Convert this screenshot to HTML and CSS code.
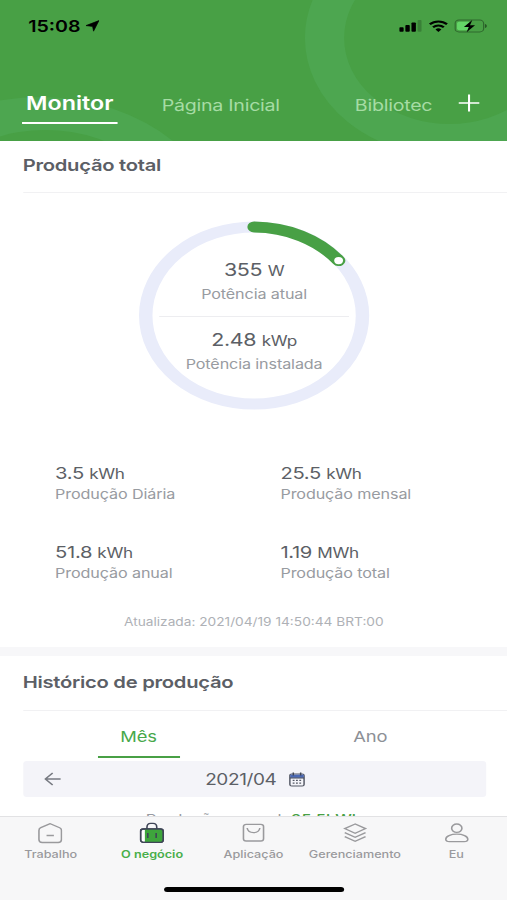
FILE: index.html
```html
<!DOCTYPE html>
<html lang="pt-BR">
<head>
  <meta charset="UTF-8">
  <meta name="viewport" content="width=device-width, initial-scale=1.0">
  <link rel="stylesheet" href="styles.css">
  <title>Monitor</title>
</head>
<body>
  <div class="screen">
    <header class="header">
      <svg class="header__rings" viewBox="0 0 414 141">
        <circle cx="367" cy="38" r="102" fill="none" stroke="#4da650" stroke-width="32"/>
        <circle cx="33" cy="252" r="155" fill="#4da650"/>
        <circle cx="37" cy="240" r="110" fill="#48a045"/>
      </svg>

      <div class="status">
        <span class="status__time">15:08</span>
        <svg class="status__location" width="11" height="12" viewBox="0 0 11 12">
          <path d="M10.8.6 6.4 11.2 5.6 6.4.2 5.6z" stroke="#000" stroke-width=".6"/>
        </svg>
        <div class="status__icons">
          <svg width="19" height="14" viewBox="0 0 19 14">
            <rect x="0" y="8.2" width="3.6" height="4.6" rx=".8"/>
            <rect x="5" y="6" width="3.6" height="6.8" rx=".8"/>
            <rect x="10" y="3.4" width="3.6" height="9.4" rx=".8"/>
            <rect x="15" y="1" width="3.2" height="11.8" rx=".8" opacity=".2"/>
          </svg>
          <svg width="16" height="14" viewBox="0 0 16 14" fill="none" stroke="#000" stroke-width="2">
            <path d="M1 5.3a10 10 0 0 1 14 0M3.6 8.3a6.3 6.3 0 0 1 8.8 0"/>
            <path d="M5.6 10.4a3.5 3.5 0 0 1 4.8 0L8 12.9z" fill="#000" stroke="none"/>
          </svg>
          <svg width="27" height="14" viewBox="0 0 27 14">
            <rect x=".6" y="1.1" width="23.3" height="11.8" rx="3.2" fill="none" stroke="#000" stroke-opacity=".35"/>
            <rect x="2.2" y="2.7" width="11" height="8.6" rx="1.8" fill="#64d667"/>
            <path d="M25 5v4c1-.4 1.5-1.1 1.5-2S26 5.4 25 5z" opacity=".45"/>
            <path d="M14.6.9 7.800 7.900h4L10 13.200l6.900-7h-4z"/>
          </svg>
        </div>
      </div>

      <nav class="tabs">
        <a class="tabs__item tabs__item_active"><span>Monitor</span></a>
        <a class="tabs__item tabs__item_home">Página Inicial</a>
        <a class="tabs__item tabs__item_library">Bibliotec</a>
        <svg class="tabs__add" width="18" height="18" viewBox="0 0 18 18">
          <path d="M9 .6v16.800M.6 9h16.800" stroke="#fff" stroke-width="1.7"/>
        </svg>
      </nav>
    </header>

    <main class="content">
      <section class="card card_total">
        <h2 class="card__title card__title_total">Produção total</h2>

        <div class="gauge">
          <svg class="gauge__ring" width="189" height="189" viewBox="0 0 189 189" fill="none">
            <circle cx="94.5" cy="94.5" r="88.5" stroke="#e9ecfa" stroke-width="11"/>
            <path d="M94.5 6A88.500 88.500 0 0 1 163.500 39.600" stroke="#48a045" stroke-width="11" stroke-linecap="round"/>
            <circle cx="163.500" cy="39.600" r="3.600" fill="#fff"/>
          </svg>
          <p class="gauge__value">355 <small>W</small></p>
          <p class="gauge__label">Potência atual</p>
          <hr class="gauge__line">
          <p class="gauge__value">2.48 <small>kWp</small></p>
          <p class="gauge__label">Potência instalada</p>
        </div>

        <div class="stats">
          <div class="stats__item">
            <p class="stats__value">3.5 <small>kWh</small></p>
            <p class="stats__label">Produção Diária</p>
          </div>
          <div class="stats__item">
            <p class="stats__value">25.5 <small>kWh</small></p>
            <p class="stats__label">Produção mensal</p>
          </div>
          <div class="stats__item">
            <p class="stats__value">51.8 <small>kWh</small></p>
            <p class="stats__label">Produção anual</p>
          </div>
          <div class="stats__item">
            <p class="stats__value">1.19 <small>MWh</small></p>
            <p class="stats__label">Produção total</p>
          </div>
        </div>

        <p class="updated">Atualizada: 2021/04/19 14:50:44 BRT:00</p>
      </section>

      <section class="card card_history">
        <h2 class="card__title">Histórico de produção</h2>

        <div class="period">
          <a class="period__item period__item_active"><span>Mês</span></a>
          <a class="period__item"><span>Ano</span></a>
        </div>

        <div class="date">
          <svg class="date__back" width="14" height="14" viewBox="0 0 14 14" fill="none" stroke="#777a82" stroke-width="1.3">
            <path d="M13.500 7H1M7 1 1 7l6 6"/>
          </svg>
          <span class="date__text">2021/04</span>
          <svg width="13" height="15" viewBox="0 0 13 15" fill="none">
            <rect x=".7" y="2" width="11.6" height="12" rx="1.5" fill="#f4f4f9" stroke="#555966" stroke-width="1.2"/>
            <path d="M1 2.600h11v3.200H1z" fill="#4b69b5"/>
            <path d="M.7 6h11.600M3.500.5v3M9.500.5v3" stroke="#3f4557" stroke-width="1.2"/>
            <path d="M3 8.400h7M3 11.200h7" stroke="#555966" stroke-width="1.3" stroke-dasharray="1.5 1.2"/>
          </svg>
        </div>

        <p class="summary">Produção mensal: <b>25.5kWh</b></p>
      </section>
    </main>

    <footer class="menu">
      <div class="menu__list">
        <a class="menu__item">
          <svg class="menu__icon" viewBox="0 0 20 22">
            <path d="M10 1.700 2.300 5.700C1.200 6.300.8 7.200.8 8.500V17.500c0 2 .8 3 2.700 3h13c1.900 0 2.700-1 2.700-3v-9c0-1.300-.4-2.200-1.500-2.800zM7 13.500h6"/>
          </svg>
          Trabalho
        </a>
        <a class="menu__item menu__item_active">
          <svg class="menu__icon" viewBox="0 0 20 22">
            <rect x=".8" y="7" width="18.4" height="13.300" rx="2.200" fill="#fff"/>
            <path d="M4.300 7H17c1.500 0 2.200.7 2.200 2.200v8.900c0 1.500-.7 2.200-2.200 2.200H4.300z" fill="#3ea53c" stroke="none"/>
            <rect x=".8" y="7" width="18.4" height="13.300" rx="2.200"/>
            <path d="M6 7V5.300c0-2.600 1-3.900 3-3.900h2c2 0 3 1.300 3 3.900V7M6.700 11v5M13.500 11v5"/>
          </svg>
          O negócio
        </a>
        <a class="menu__item">
          <svg class="menu__icon" viewBox="0 0 20 22">
            <rect x="1.800" y="2.400" width="16.400" height="16.600" rx="2.200"/>
            <path d="M4.800 6c1 6.200 9.400 6.200 10.400 0"/>
          </svg>
          Aplicação
        </a>
        <a class="menu__item">
          <svg class="menu__icon" viewBox="0 0 20 22">
            <path d="M10 2 1.500 6.600 10 11.200l8.500-4.600zM1.500 10.600 10 15.200l8.500-4.600M1.500 14.600 10 19.200l8.500-4.600"/>
          </svg>
          Gerenciamento
        </a>
        <a class="menu__item">
          <svg class="menu__icon" viewBox="0 0 20 22">
            <circle cx="10" cy="6.200" r="4.200"/>
            <path d="M10 12.200c-5 0-9 2-9 5 0 2 1.300 2.400 3 2.400h12c1.700 0 3-.4 3-2.400 0-3-4-5-9-5z"/>
          </svg>
          Eu
        </a>
      </div>
      <div class="menu__handle"></div>
    </footer>
  </div>
</body>
</html>
```
FILE: styles.css
```css
* {
  box-sizing: border-box;
}

body {
  margin: 0;
  height: 900px;
  overflow: hidden;
  font-family: Inter, 'Helvetica Neue', sans-serif;
  background: #fff;
  color: #5c5f66;
}

h2, p {
  margin: 0;
}

small {
  line-height: 1;
}

.screen {
  display: flex;
  flex-direction: column;
  width: 414px;
  height: 900px;
  transform: scaleX(1.22464);
  transform-origin: 0 0;
}

.header {
  position: relative;
  flex: none;
  height: 141px;
  overflow: hidden;
  background: #48a045;
}

.header__rings {
  position: absolute;
  top: 0;
  left: 0;
  width: 414px;
  height: 141px;
}

.status {
  position: relative;
  display: flex;
  align-items: center;
  height: 52px;
  padding: 0 16px 0 23px;
  color: #000;
}

.status__time {
  font-size: 16px;
  font-weight: 600;
}

.status__location {
  margin-left: 4px;
}

.status__icons {
  display: flex;
  align-items: center;
  gap: 5px;
  margin-left: auto;
}

.tabs {
  position: relative;
  display: flex;
  align-items: flex-start;
  padding: 38px 22px 0 18px;
  font-size: 16px;
  letter-spacing: -0.2px;
  line-height: 30px;
  color: #a6dca4;
}

.tabs__item_active {
  width: 78px;
  height: 34px;
  border-bottom: 2px solid #fff;
  font-size: 19px;
  font-weight: 600;
  letter-spacing: 0;
  line-height: 27px;
  text-align: center;
  color: #fff;
}

.tabs__item_home {
  margin-left: 36px;
}

.tabs__item_library {
  margin-left: auto;
}

.tabs__add {
  margin: 4px 0 0 21px;
}

.content {
  flex: 1;
  min-height: 0;
  overflow: hidden;
}

.card_total {
  height: 515px;
  padding: 12px 0 15px 18.5px;
  border-bottom: 9px solid #f7f7f9;
}

.card_history {
  padding: 14px 0 0 18.5px;
}

.card__title {
  padding-bottom: 16px;
  border-bottom: 1px solid #f1f1f3;
  font-size: 16.5px;
  font-weight: 600;
  letter-spacing: -0.22px;
  line-height: 24px;
}

.card__title_total {
  padding: 1px 0 15px;
  line-height: 23px;
}

.gauge {
  position: relative;
  width: 189px;
  height: 189px;
  margin: 28px 0 0 94.5px;
  padding-top: 37px;
  text-align: center;
}

.gauge__ring {
  position: absolute;
  top: 0;
  left: 0;
}

.gauge__value {
  font-size: 17.5px;
  letter-spacing: -0.3px;
  line-height: 23px;
}

.gauge__value small,
.stats__value small {
  font-size: 14px;
}

.gauge__label {
  font-size: 13.2px;
  letter-spacing: -0.1px;
  line-height: 27px;
  color: #989ba1;
}

.gauge__line {
  width: 155px;
  height: 1px;
  margin: 8px auto 11px;
  border: 0;
  background: #ededf0;
}

.stats {
  display: grid;
  grid-template-columns: 184px 1fr;
  row-gap: 37px;
  margin-top: 52px;
  padding-left: 26.5px;
}

.stats__value {
  font-size: 16.5px;
  letter-spacing: -0.3px;
  line-height: 22px;
}

.stats__label {
  font-size: 13.2px;
  letter-spacing: -0.1px;
  line-height: 20px;
  color: #989ba1;
}

.updated {
  margin: 29px 18px 0 0;
  font-size: 11.2px;
  line-height: 20px;
  text-align: center;
  color: #aeb1b6;
}

.period {
  display: flex;
  padding-right: 17px;
}

.period__item {
  display: flex;
  flex: 1;
  justify-content: center;
  font-size: 15px;
  letter-spacing: -0.1px;
  line-height: 20px;
  color: #8d9096;
}

.period__item span {
  width: 67px;
  padding: 16px 0 9px;
  border-bottom: 2px solid transparent;
  text-align: center;
}

.period__item_active {
  color: #48a84b;
}

.period__item_active span {
  border-color: #48a045;
}

.date {
  display: flex;
  align-items: center;
  height: 36px;
  margin: 3px 17px 0 0;
  padding-left: 17px;
  border-radius: 3px;
  background: #f4f4f9;
}

.date__text {
  margin: 0 10px 0 118px;
  font-size: 15.5px;
  letter-spacing: -0.3px;
}

.summary {
  margin: 12px 18px 0 0;
  font-size: 13.5px;
  line-height: 20px;
  text-align: center;
  color: #989ba1;
}

.summary b {
  font-weight: 500;
  color: #48a045;
}

.menu {
  flex: none;
  height: 84px;
  border-top: 1px solid #e2e2e4;
  background: #f7f7f8;
}

.menu__list {
  display: flex;
  height: 70px;
  padding-top: 5px;
}

.menu__item {
  display: flex;
  flex: 1;
  flex-direction: column;
  align-items: center;
  font-size: 10.3px;
  font-weight: 500;
  line-height: 18px;
  color: #9a9a9d;
}

.menu__item_active {
  font-weight: 600;
  color: #48ae4a;
}

.menu__icon {
  width: 20px;
  height: 22px;
  margin-bottom: 1px;
  fill: none;
  stroke: #9a9a9d;
  stroke-width: 1.3;
}

.menu__item_active .menu__icon {
  stroke: #3f4557;
}

.menu__handle {
  width: 147px;
  height: 5px;
  margin: 0 auto;
  border-radius: 3px;
  background: #000;
}
```
